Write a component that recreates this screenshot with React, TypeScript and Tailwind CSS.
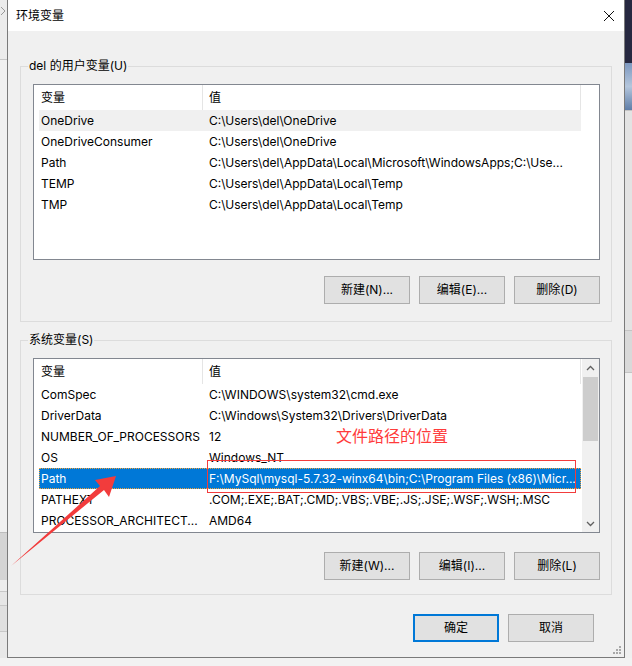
import React from "react";

const FONT = 'Inter, "Noto Sans CJK SC", sans-serif';

type Row = [string, string];

const userRows: Row[] = [
  ["OneDrive", "C:\\Users\\del\\OneDrive"],
  ["OneDriveConsumer", "C:\\Users\\del\\OneDrive"],
  ["Path", "C:\\Users\\del\\AppData\\Local\\Microsoft\\WindowsApps;C:\\Use..."],
  ["TEMP", "C:\\Users\\del\\AppData\\Local\\Temp"],
  ["TMP", "C:\\Users\\del\\AppData\\Local\\Temp"],
];

const sysRows: Row[] = [
  ["ComSpec", "C:\\WINDOWS\\system32\\cmd.exe"],
  ["DriverData", "C:\\Windows\\System32\\Drivers\\DriverData"],
  ["NUMBER_OF_PROCESSORS", "12"],
  ["OS", "Windows_NT"],
  ["Path", "F:\\MySql\\mysql-5.7.32-winx64\\bin;C:\\Program Files (x86)\\Micr..."],
  ["PATHEXT", ".COM;.EXE;.BAT;.CMD;.VBS;.VBE;.JS;.JSE;.WSF;.WSH;.MSC"],
  ["PROCESSOR_ARCHITECT...", "AMD64"],
];

function Chevron({ up }: { up: boolean }) {
  return (
    <svg width="9" height="6" viewBox="0 0 9 6">
      <path
        d={up ? "M1 5 L4.5 1.5 L8 5" : "M1 1 L4.5 4.5 L8 1"}
        fill="none"
        stroke="#606060"
        strokeWidth="1.3"
      />
    </svg>
  );
}

function ListView({
  rows,
  hover,
  selected,
  scrollbar,
  height,
}: {
  rows: Row[];
  hover?: number;
  selected?: number;
  scrollbar?: boolean;
  height: string;
}) {
  return (
    <div className={`flex border border-[#828790] bg-white ${height}`}>
      <div className="flex-1 flex flex-col">
        <div className="flex h-[25px] items-center text-black">
          <div className="w-[169px] h-full pl-[7px] flex items-center border-r border-[#e5e5e5]">变量</div>
          <div className="w-[378px] h-full pl-[6px] flex items-center border-r border-[#e5e5e5]">值</div>
        </div>
        {rows.map((r, i) => {
          const sel = i === selected;
          const hov = i === hover;
          return (
            <div
              key={i}
              className={`ml-[5px] w-[542px] h-[21px] flex items-center ${
                sel
                  ? "bg-[#0078d7] text-white outline-1 outline-dotted outline-[#f0a33c] -outline-offset-1"
                  : hov
                  ? "bg-[#f0f0f0] text-black"
                  : "text-black"
              }`}
            >
              <div className="w-[164px] pl-[2px] whitespace-nowrap overflow-hidden">{r[0]}</div>
              <div className="flex-1 pl-[6px] whitespace-nowrap overflow-hidden">{r[1]}</div>
            </div>
          );
        })}
      </div>
      {scrollbar && (
        <div className="w-[17px] bg-[#f0f0f0] flex flex-col">
          <div className="h-[17px] flex items-center justify-center">
            <Chevron up />
          </div>
          <div className="flex-1">
            <div className="mt-[1px] mx-[1px] h-[64px] bg-[#cdcdcd]" />
          </div>
          <div className="h-[17px] flex items-center justify-center">
            <Chevron up={false} />
          </div>
        </div>
      )}
    </div>
  );
}

function Btn({ label, primary }: { label: string; primary?: boolean }) {
  return (
    <div
      className={`w-[86px] h-[28px] flex items-center justify-center bg-[#e1e1e1] text-black ${
        primary ? "border-2 border-[#0078d7]" : "border border-[#adadad]"
      }`}
    >
      {label}
    </div>
  );
}

function Group({
  legend,
  children,
  className,
}: {
  legend: string;
  children: React.ReactNode;
  className?: string;
}) {
  return (
    <div className={`relative mx-[12px] border border-[#dcdcdc] pl-[12px] pr-[11px] ${className ?? ""}`}>
      <span className="absolute left-[7px] -top-[9px] px-[1px] leading-[16px] bg-[#f0f0f0] text-black">{legend}</span>
      {children}
    </div>
  );
}

export default function App() {
  return (
    <div
      className="relative w-[632px] h-[666px] overflow-hidden bg-[#f0f0f0] text-[12px] leading-[16px]"
      style={{ fontFamily: FONT }}
    >
      <div className="flex h-[658px]">
        {/* left strip */}
        <div className="w-[7px] flex flex-col">
          <div className="h-[60px] bg-[#ececec] border-b border-[#c8c8c8] pt-[6px]">
            <svg width="7" height="10" viewBox="0 0 7 10">
              <path d="M1 1 L5 5 L1 9" fill="none" stroke="#9a9a9a" strokeWidth="1" />
            </svg>
          </div>
          <div className="h-[472px] bg-[#f0f0f0]" />
          <div className="h-[48px] bg-[#d4d4d4] border-t border-[#bdbdbd]" />
          <div className="h-[12px] bg-[#ededed] border-b border-[#c8c8c8]" />
          <div className="h-[14px] bg-[#e6e6e6] border-b border-[#c8c8c8]" />
          <div className="h-[26px] bg-[#e0e0e0] border-b border-[#c8c8c8]" />
          <div className="flex-1 bg-[#e8e8e8]" />
        </div>

        {/* dialog */}
        <div className="w-[618px] h-[658px] border-x border-b border-[#7a7a7a] bg-[#f0f0f0] flex flex-col">
          <div className="h-[31px] bg-white flex items-center justify-between pl-[8px] pr-[9px] text-black">
            <span>环境变量</span>
            <svg width="12" height="12" viewBox="0 0 12 12">
              <path d="M1 1 L11 11 M11 1 L1 11" stroke="#111" strokeWidth="1" />
            </svg>
          </div>

          <Group legend="del 的用户变量(U)" className="mt-[35px] pt-[17px] pb-[17px]">
            <ListView rows={userRows} hover={0} height="h-[176px]" />
            <div className="mt-[16px] flex justify-end gap-[9px]">
              <Btn label="新建(N)..." />
              <Btn label="编辑(E)..." />
              <Btn label="删除(D)" />
            </div>
          </Group>

          <Group legend="系统变量(S)" className="mt-[18px] pt-[17px] pb-[14px]">
            <ListView rows={sysRows} selected={4} scrollbar height="h-[175px]" />
            <div className="mt-[19px] flex justify-end gap-[9px]">
              <Btn label="新建(W)..." />
              <Btn label="编辑(I)..." />
              <Btn label="删除(L)" />
            </div>
          </Group>

          <div className="mt-[19px] flex justify-end gap-[9px] pr-[30px]">
            <Btn label="确定" primary />
            <Btn label="取消" />
          </div>

          <div className="flex-1 flex items-end justify-end pr-[3px] pb-[3px]">
            <svg width="8" height="8" viewBox="0 0 8 8">
              <rect x="6" y="0" width="2" height="2" fill="#a8a8a8" />
              <rect x="3" y="3" width="2" height="2" fill="#a8a8a8" />
              <rect x="6" y="3" width="2" height="2" fill="#a8a8a8" />
              <rect x="0" y="6" width="2" height="2" fill="#a8a8a8" />
              <rect x="3" y="6" width="2" height="2" fill="#a8a8a8" />
              <rect x="6" y="6" width="2" height="2" fill="#a8a8a8" />
            </svg>
          </div>
        </div>

        {/* right strip */}
        <div className="w-[7px] flex flex-col">
          <div className="h-[63px] bg-[#262840]" />
          <div className="h-[47px] bg-gradient-to-b from-[#7d98bf] via-[#b4c6dc] to-[#5f7ea8]" />
          <div className="h-[220px] bg-[#e3e3e3] border-t border-[#c4c4c4]" />
          <div className="h-[43px] bg-[#d9d9d9] border-y border-[#c4c4c4]" />
          <div className="flex-1 bg-[#f0f0f0]" />
        </div>
      </div>
      <div className="h-[8px] bg-[#f2f2f2]" />

      {/* annotations */}
      <span className="absolute left-[336px] top-[426px] text-[16px] leading-[20px] text-[#ff3b3b]">文件路径的位置</span>
      <div className="absolute left-[207px] top-[460px] w-[369px] h-[33px] border border-[#f23c3c]" />
      <svg className="absolute left-0 top-0 pointer-events-none" width="632" height="666" viewBox="0 0 632 666">
        <polygon points="11,566 104,490 109,497 116,476 95,480 100,486" fill="#f23c3c" />
      </svg>
    </div>
  );
}
